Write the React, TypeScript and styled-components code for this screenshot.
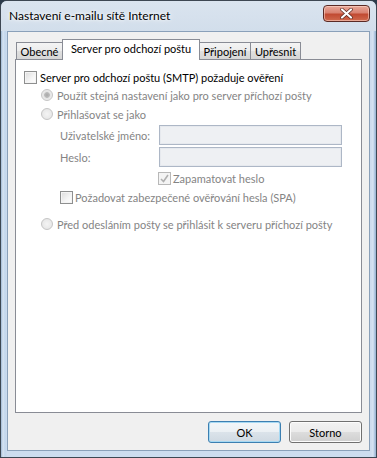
import React from "react";
import styled, { createGlobalStyle } from "styled-components";

const Global = createGlobalStyle`
  html, body { margin: 0; padding: 0; background: #2b3a4a; }
  body { font-family: Lato, "Noto Sans", "DejaVu Sans", sans-serif; font-size: 11px; }
  * { box-sizing: border-box; }
`;

const Window = styled.div`
  width: 377px;
  height: 458px;
  display: flex;
  flex-direction: column;
  border: 1px solid #3d4752;
  border-radius: 7px 7px 0 0;
  background: linear-gradient(90deg, #9fb8d4 0px, #d7e4f2 2px, #c2d6ec 4px, #cddcee 6px, #cddcee 370px, #d7e4f2 372px, #a6bfdc 374px, #9ab3cf 375px);
  padding: 0 6px 6px 6px;
  overflow: hidden;
`;

const TitleBar = styled.div`
  height: 30px;
  display: flex;
  align-items: flex-start;
  justify-content: space-between;
  background: linear-gradient(180deg, #dae4ef 0%, #d2deeb 100%);
  margin: 0 -6px 0 -6px;
  padding: 0 6px 0 8px;
`;

const Title = styled.div`
  color: #000;
  font-size: 12px;
  padding-top: 7px;
  text-shadow: 0 0 6px #fff, 0 0 3px #fff;
`;

const CloseButton = styled.div`
  width: 47px;
  height: 17px;
  margin-top: 4px;
  border: 1px solid #5a2a25;
  border-radius: 4px;
  background: linear-gradient(180deg, #e8a899 0%, #d98271 45%, #c14a32 55%, #d06a4e 100%);
  display: flex;
  align-items: center;
  justify-content: center;
  box-shadow: inset 0 0 0 1px rgba(255, 220, 210, 0.55);
`;

const Client = styled.div`
  flex: 1;
  display: flex;
  flex-direction: column;
  background: #f0f0f0;
  border: 1px solid #8aa0b9;
  padding: 7px 7px 7px 7px;
`;

const TabRow = styled.div`
  display: flex;
  align-items: flex-end;
  padding-left: 1px;
  height: 21px;
  position: relative;
  z-index: 1;
  margin-bottom: -1px;
`;

const Tab = styled.div<{ $active?: boolean; $w: number }>`
  width: ${(p) => p.$w}px;
  height: ${(p) => (p.$active ? "21px" : "18px")};
  margin-left: -1px;
  padding-bottom: ${(p) => (p.$active ? "3px" : "0")};
  border: 1px solid #898c95;
  border-bottom: ${(p) => (p.$active ? "none" : "1px solid #898c95")};
  background: ${(p) => (p.$active ? "#ffffff" : "linear-gradient(180deg, #f4f4f4 0%, #ececec 50%, #e0e0e0 51%, #d6d6d6 100%)")};
  color: #000;
  display: flex;
  align-items: center;
  justify-content: center;
  position: relative;
  z-index: ${(p) => (p.$active ? 2 : 1)};
  white-space: nowrap;
  &:first-child { margin-left: 0; }
`;

const Panel = styled.div`
  flex: 1;
  background: #fff;
  border: 1px solid #898c95;
  padding: 8px 8px 0 8px;
  display: flex;
  flex-direction: column;
`;

const Row = styled.div<{ $indent?: number; $mt?: number; $h?: number; $gap?: number }>`
  display: flex;
  align-items: center;
  padding-left: ${(p) => p.$indent ?? 0}px;
  margin-top: ${(p) => p.$mt ?? 0}px;
  height: ${(p) => p.$h ?? 18}px;
  gap: ${(p) => p.$gap ?? 3}px;
`;

const Label = styled.span<{ $disabled?: boolean }>`
  color: ${(p) => (p.$disabled ? "#848484" : "#000")};
  white-space: nowrap;
`;

const FieldLabel = styled(Label)`
  width: 99px;
  flex: none;
`;

const Box = styled.div`
  width: 13px;
  height: 13px;
  border: 1px solid #8e8f8f;
  background: linear-gradient(135deg, #dcdcdc 0%, #f5f5f5 60%, #ffffff 100%);
  box-shadow: inset 0 0 0 1px #f4f4f4;
  flex: none;
  display: flex;
  align-items: center;
  justify-content: center;
`;

const DisabledBox = styled(Box)`
  border-color: #b8b8b8;
  background: #f4f4f4;
`;

const Radio = styled.div<{ $checked?: boolean }>`
  width: 12px;
  height: 12px;
  border-radius: 50%;
  border: 1px solid #c5c5c5;
  background: radial-gradient(circle at 50% 50%, ${(p) => (p.$checked ? "#a9a9a9 0, #bcbcbc 2.5px, #e4e4e4 3.2px, #f4f4f4 100%" : "#f4f4f4 0, #e2e2e2 100%")});
  flex: none;
`;

const TextField = styled.div`
  width: 183px;
  height: 20px;
  border: 1px solid #adb7c6;
  background: #eef0f3;
  box-shadow: inset 0 0 0 1px #e6e9ee;
  flex: none;
`;

const Buttons = styled.div`
  display: flex;
  justify-content: flex-end;
  gap: 8px;
  margin-top: 8px;
`;

const Button = styled.div<{ $default?: boolean }>`
  width: 73px;
  height: 22px;
  border: 1px solid ${(p) => (p.$default ? "#3c7fb1" : "#707070")};
  border-radius: 3px;
  background: ${(p) =>
    p.$default
      ? "linear-gradient(180deg, #f2f6f9 0%, #ebf0f4 50%, #dbe3ea 51%, #cfd9e2 100%)"
      : "linear-gradient(180deg, #f2f2f2 0%, #ebebeb 50%, #dddddd 51%, #cfcfcf 100%)"};
  box-shadow: inset 0 0 0 1px ${(p) => (p.$default ? "#a6d9f3" : "#fcfcfc")};
  display: flex;
  align-items: center;
  justify-content: center;
  color: #000;
`;

const Check = ({ color }: { color: string }) => (
  <svg width="9" height="9" viewBox="0 0 9 9">
    <path d="M1 5 L3.5 7.5 L8 1" fill="none" stroke={color} strokeWidth="1.6" />
  </svg>
);

export default function App() {
  return (
    <>
      <Global />
      <Window>
        <TitleBar>
          <Title>Nastavení e-mailu sítě Internet</Title>
          <CloseButton>
            <svg width="13" height="11" viewBox="0 0 13 11">
              <path d="M2 1.5 L11 9.5 M11 1.5 L2 9.5" stroke="#5a2a22" strokeWidth="3.6" strokeLinecap="round" />
              <path d="M2 1.5 L11 9.5 M11 1.5 L2 9.5" stroke="#ffffff" strokeWidth="2.2" strokeLinecap="round" />
            </svg>
          </CloseButton>
        </TitleBar>
        <Client>
          <TabRow>
            <Tab $w={47}>Obecné</Tab>
            <Tab $active $w={138}>Server pro odchozí poštu</Tab>
            <Tab $w={52}>Připojení</Tab>
            <Tab $w={51}>Upřesnit</Tab>
          </TabRow>
          <Panel>
            <Row>
              <Box />
              <Label>Server pro odchozí poštu (SMTP) požaduje ověření</Label>
            </Row>
            <Row $indent={17} $gap={4}>
              <Radio $checked />
              <Label $disabled>Použít stejná nastavení jako pro server příchozí pošty</Label>
            </Row>
            <Row $indent={17} $mt={1} $gap={4}>
              <Radio />
              <Label $disabled>Přihlašovat se jako</Label>
            </Row>
            <Row $indent={36} $mt={1} $h={22} $gap={0}>
              <FieldLabel $disabled>Uživatelské jméno:</FieldLabel>
              <TextField />
            </Row>
            <Row $indent={36} $h={22} $gap={0}>
              <FieldLabel $disabled>Heslo:</FieldLabel>
              <TextField />
            </Row>
            <Row $indent={134} $mt={1} $gap={2}>
              <DisabledBox>
                <Check color="#b0b0b0" />
              </DisabledBox>
              <Label $disabled>Zapamatovat heslo</Label>
            </Row>
            <Row $indent={36} $mt={1} $gap={2}>
              <Box />
              <Label $disabled>Požadovat zabezpečené ověřování hesla (SPA)</Label>
            </Row>
            <Row $indent={17} $mt={9} $gap={4}>
              <Radio />
              <Label $disabled>Před odesláním pošty se přihlásit k serveru příchozí pošty</Label>
            </Row>
          </Panel>
          <Buttons>
            <Button $default>OK</Button>
            <Button>Storno</Button>
          </Buttons>
        </Client>
      </Window>
    </>
  );
}
